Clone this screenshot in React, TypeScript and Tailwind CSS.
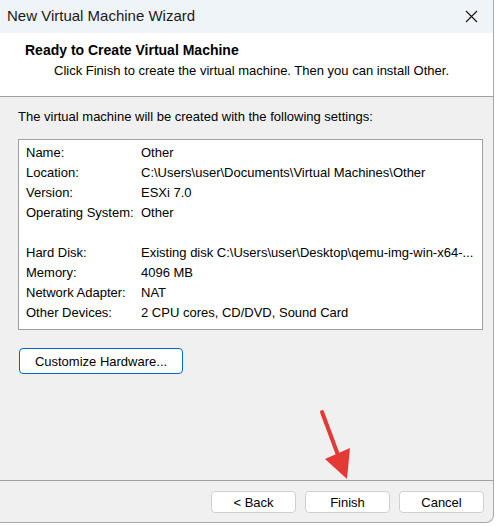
import React from "react";

const rows: [string, string][] = [
  ["Name:", "Other"],
  ["Location:", "C:\\Users\\user\\Documents\\Virtual Machines\\Other"],
  ["Version:", "ESXi 7.0"],
  ["Operating System:", "Other"],
  ["", ""],
  ["Hard Disk:", "Existing disk C:\\Users\\user\\Desktop\\qemu-img-win-x64-..."],
  ["Memory:", "4096 MB"],
  ["Network Adapter:", "NAT"],
  ["Other Devices:", "2 CPU cores, CD/DVD, Sound Card"],
];

export default function App() {
  return (
    <div
      className="relative w-[503px] h-[526px] bg-white overflow-hidden text-[#000]"
      style={{ fontFamily: '"Liberation Sans", Arial, sans-serif' }}
    >
      <div className="w-[494px] h-[523px] flex flex-col border-r border-b border-[#a8a8a8] rounded-br-[8px] overflow-hidden bg-[#f0f0f0]">
        {/* Title bar */}
        <div className="h-[33px] bg-[#eff4f9] flex items-center justify-between pl-[7px] pr-[14px] shrink-0">
          <span className="text-[15px] text-[#1a1a1a]">New Virtual Machine Wizard</span>
          <svg width="13" height="13" viewBox="0 0 13 13" className="mr-[1px]">
            <path d="M1 1 L12 12 M12 1 L1 12" stroke="#1a1a1a" strokeWidth="1.2" />
          </svg>
        </div>
        {/* Header */}
        <div className="h-[64px] bg-white border-b border-[#a0a0a0] shrink-0 pl-[25px] pt-[8px]">
          <div className="text-[14px] font-bold leading-[18px]">Ready to Create Virtual Machine</div>
          <div className="text-[13px] leading-[18px] pl-[29px] mt-[3px]">
            Click Finish to create the virtual machine. Then you can install Other.
          </div>
        </div>
        {/* Body */}
        <div className="flex-1 px-[18px] pt-[11px]">
          <div className="text-[13px] leading-[18px]">
            The virtual machine will be created with the following settings:
          </div>
          <div className="mt-[13px] w-[465px] h-[191px] bg-white border border-[#a0a0a0] pt-[3px] pl-[7px]">
            {rows.map(([k, v], i) => (
              <div key={i} className="flex h-[20px] items-center text-[13px]">
                <span className="w-[115px] shrink-0">{k}</span>
                <span className="whitespace-nowrap">{v}</span>
              </div>
            ))}
          </div>
          <button className="mt-[18px] ml-[1px] w-[164px] h-[26px] bg-white border border-[#0067c0] rounded-[4px] text-[13px] flex items-center justify-center pt-[2px]">
            Customize Hardware...
          </button>
        </div>
        {/* Footer */}
        <div className="h-[42px] border-t border-[#a0a0a0] shrink-0 flex items-start justify-end gap-[9px] pr-[9px] pt-[10px]">
          {["< Back", "Finish", "Cancel"].map((b) => (
            <button
              key={b}
              className="w-[85px] h-[22px] bg-white border border-[#d0d0d0] rounded-[4px] text-[13px] flex items-center justify-center pt-[2px]"
            >
              {b}
            </button>
          ))}
        </div>
      </div>
      {/* Red arrow annotation */}
      <svg className="absolute left-0 top-0 pointer-events-none" width="503" height="526">
        <line x1="322" y1="412" x2="338" y2="455" stroke="#e53935" strokeWidth="4" strokeLinecap="round" />
        <polygon points="325,459 350,448 347,479" fill="#e53935" />
      </svg>
    </div>
  );
}
